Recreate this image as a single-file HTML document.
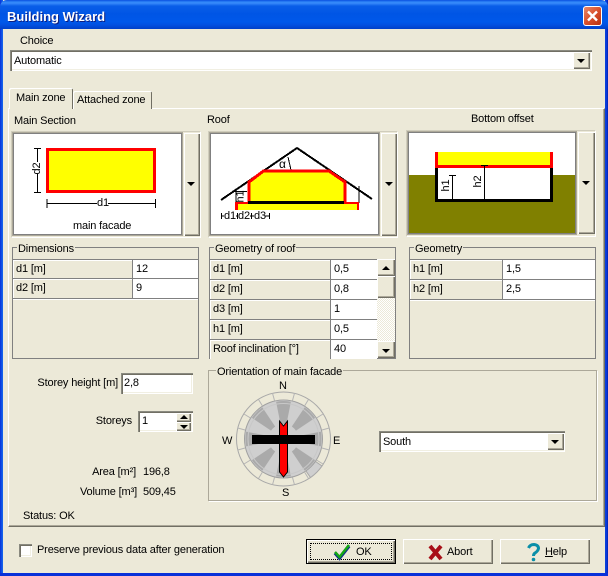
<!DOCTYPE html>
<html><head><meta charset="utf-8"><title>Building Wizard</title>
<style>
html,body{margin:0;padding:0;width:608px;height:576px;overflow:hidden;background:#0831d9}
*{box-sizing:border-box}
div,span,svg{position:absolute}
#win{left:0;top:0;width:608px;height:576px;background:#ECE9D8;font:11px/13px "Liberation Sans",sans-serif;letter-spacing:-.15px;color:#000;overflow:hidden}
.t{white-space:nowrap}
.bev{background:#ECE9D8;box-shadow:inset 1px 1px #fff,inset -1px -1px #716f64,inset -2px -2px #aca899}
.sunk{background:#fff;box-shadow:inset 1px 1px #8a8a80,inset 2px 2px #716f64,inset -1px -1px #fff,inset -2px -2px #f1efe2}
.arr{width:0;height:0;border-left:4px solid transparent;border-right:4px solid transparent;border-top:4px solid #000}
.up{width:0;height:0;border-left:4px solid transparent;border-right:4px solid transparent;border-bottom:4px solid #000}
.pic{background:#fff;border:1px solid #808080;box-shadow:0 0 0 1px #aca899}
.frame{border:1px solid #d0cdbc;border-right-color:#fff;border-bottom-color:#fff}
.grp{border:1px solid #808080}
.cell{border-top:1px solid #808080;border-left:1px solid #808080;height:20px;line-height:18px;padding-left:3px;white-space:nowrap}
.lab{background:#ECE9D8;box-shadow:inset 1px 1px #fff}
.val{background:#fff}
.btn{background:#ECE9D8;height:25px;width:90px;top:539px;box-shadow:inset 1px 1px #fff,inset -1px -1px #716f64,inset -2px -2px #aca899}
</style></head><body>
<div id="win">
<!-- window frame -->
<div style="left:0;top:0;width:3px;height:576px;background:linear-gradient(90deg,#0831d9,#166aee)"></div>
<div style="left:605px;top:0;width:3px;height:576px;background:linear-gradient(90deg,#0a45d8,#0831d9 70%,#001ea0)"></div>
<div style="left:0;top:573px;width:608px;height:3px;background:#0831d9"></div>
<!-- title -->
<div style="left:0;top:0;width:608px;height:29px;border-radius:7px 7px 0 0;background:linear-gradient(180deg,#0a50e0 0,#2f86f8 2px,#3a8cfb 3px,#0a5ee8 6px,#0055e5 14px,#0058ea 22px,#0250e0 25px,#0140c8 29px)"></div>
<div class="t" style="left:7px;top:9px;font:bold 13px/15px 'Liberation Sans',sans-serif;letter-spacing:0;color:#fff;text-shadow:1px 1px #0f1f80">Building Wizard</div>
<div style="left:583px;top:6px;width:19px;height:20px;border:1px solid #fff;border-radius:3px;background:linear-gradient(135deg,#e8896a,#d9502c 50%,#b83010)"></div>
<svg style="left:583px;top:6px" width="19" height="20"><path d="M5 5.500L14 14.500M14 5.500L5 14.500" stroke="#fff" stroke-width="2.400"/></svg>
<!-- choice -->
<div class="t" style="left:20px;top:35px">Choice</div>
<div class="sunk" style="left:10px;top:50px;width:582px;height:21px"></div>
<div class="t" style="left:14px;top:55px">Automatic</div>
<div class="bev" style="left:573px;top:52px;width:17px;height:17px"></div>
<div class="arr" style="left:577px;top:59px"></div>
<!-- tabs + page -->
<div style="left:8px;top:108px;width:597px;height:419px;border-top:1px solid #fff;border-left:1px solid #fff;border-right:1px solid #716f64;border-bottom:1px solid #716f64;box-shadow:inset -1px -1px #aca899"></div>
<div class="bev" style="left:73px;top:91px;width:79px;height:18px;border-radius:2px 2px 0 0;box-shadow:inset 1px 1px #fff,inset -1px 0 #716f64"></div>
<div style="left:9px;top:88px;width:64px;height:21px;background:#ECE9D8;border-radius:2px 2px 0 0;box-shadow:inset 1px 1px #fff,inset -1px 0 #716f64"></div>
<div class="t" style="left:16px;top:92px">Main zone</div>
<div class="t" style="left:77px;top:94px">Attached zone</div>
<!-- section labels -->
<div class="t" style="left:14px;top:115px">Main Section</div>
<div class="t" style="left:207px;top:114px">Roof</div>
<div class="t" style="left:471px;top:113px">Bottom offset</div>
<!-- picture 1 -->
<div class="frame" style="left:11px;top:131px;width:190px;height:107px"></div>
<div class="pic" style="left:13px;top:133px;width:169px;height:102px"></div>
<div class="bev" style="left:184px;top:133px;width:16px;height:103px"></div>
<div class="arr" style="left:187px;top:182px"></div>
<svg style="left:0;top:0" width="608" height="260" shape-rendering="crispEdges">
<rect x="47.500" y="149.500" width="107" height="42" fill="#ff0" stroke="#f00" stroke-width="3"/>
<path d="M34 148.500H41M34 192.500H41M37.500 148V162M37.500 174V193M47 199V208M155.500 199V208M47 203.500H97M108 203.500H155" stroke="#000" fill="none"/>
</svg>
<div class="t" style="left:30px;top:162px;transform:rotate(-90deg);width:15px;text-align:center">d2</div>
<div class="t" style="left:97px;top:197px">d1</div>
<div class="t" style="left:73px;top:220px">main facade</div>
<!-- picture 2 -->
<div class="frame" style="left:208px;top:131px;width:190px;height:107px"></div>
<div class="pic" style="left:210px;top:133px;width:169px;height:102px"></div>
<div class="bev" style="left:381px;top:133px;width:16px;height:103px"></div>
<div class="arr" style="left:385px;top:182px"></div>
<svg style="left:0;top:0" width="608" height="260" shape-rendering="crispEdges">
<path d="M221 200L297 148L372 199" fill="none" stroke="#000" stroke-width="2"/>
<path d="M236 190V203M359 186V203M288 157L291 170" stroke="#000" fill="none" stroke-width="1"/>
<path d="M249 202V182L263 171H329L345 182V202Z" fill="#ff0"/>
<path d="M249 202V182L263.500 171H329L345 182V202" fill="none" stroke="#f00" stroke-width="3"/>
<rect x="235" y="202" width="124" height="8" fill="#f00"/>
<rect x="238" y="204" width="119" height="6" fill="#ff0"/>
<rect x="248" y="201" width="96" height="3" fill="#000"/>
<rect x="235" y="191" width="12" height="1" fill="#000"/>
<path d="M221.500 213V219M222 216H224M237.500 213V219M236 216H238M251.500 213V219M250 216H254M269.500 213V219M265 216H269" stroke="#000" fill="none"/>
</svg>
<div class="t" style="left:232px;top:190px;transform:rotate(-90deg);width:18px;text-align:center">h1</div>
<div class="t" style="left:279px;top:158px;font-size:12px">α</div>
<div class="t" style="left:224px;top:210px">d1</div>
<div class="t" style="left:238px;top:210px">d2</div>
<div class="t" style="left:254px;top:210px">d3</div>
<!-- picture 3 -->
<div class="frame" style="left:406px;top:130px;width:190px;height:107px"></div>
<div class="pic" style="left:408px;top:132px;width:168px;height:102px;background:linear-gradient(180deg,#fff 0,#fff 42px,#808000 42px)"></div>
<div class="bev" style="left:578px;top:132px;width:17px;height:102px"></div>
<div class="arr" style="left:582px;top:181px"></div>
<svg style="left:0;top:0" width="608" height="260" shape-rendering="crispEdges">
<rect x="435" y="152" width="118" height="50" fill="#000"/>
<rect x="438" y="168" width="112" height="31" fill="#fff"/>
<rect x="435" y="152" width="118" height="16" fill="#f00"/>
<rect x="438" y="152" width="112" height="13" fill="#ff0"/>
<path d="M452.500 175V199M449 175.500H456M484.500 165V199M481 165.500H488" stroke="#000" fill="none"/>
</svg>
<div class="t" style="left:439px;top:179px;transform:rotate(-90deg);width:15px;text-align:center">h1</div>
<div class="t" style="left:471px;top:175px;transform:rotate(-90deg);width:15px;text-align:center">h2</div>
<!-- Dimensions -->
<div class="grp" style="left:12px;top:247px;width:187px;height:112px"></div>
<div class="t" style="left:17px;top:243px;background:#ECE9D8;padding:0 1px">Dimensions</div>
<div class="cell lab" style="left:12px;top:259px;width:120px">d1 [m]</div>
<div class="cell val" style="left:132px;top:259px;width:66px">12</div>
<div class="cell lab" style="left:12px;top:278px;width:120px">d2 [m]</div>
<div class="cell val" style="left:132px;top:278px;width:66px">9</div>
<div style="left:13px;top:298px;width:185px;height:1px;background:#808080"></div>
<div style="left:13px;top:299px;width:185px;height:1px;background:#fff"></div>
<!-- Geometry of roof -->
<div class="grp" style="left:209px;top:247px;width:187px;height:112px"></div>
<div class="t" style="left:214px;top:243px;background:#ECE9D8;padding:0 1px">Geometry of roof</div>
<div class="cell lab" style="left:209px;top:259px;width:121px">d1 [m]</div>
<div class="cell val" style="left:330px;top:259px;width:47px">0,5</div>
<div class="cell lab" style="left:209px;top:279px;width:121px">d2 [m]</div>
<div class="cell val" style="left:330px;top:279px;width:47px">0,8</div>
<div class="cell lab" style="left:209px;top:299px;width:121px">d3 [m]</div>
<div class="cell val" style="left:330px;top:299px;width:47px">1</div>
<div class="cell lab" style="left:209px;top:319px;width:121px">h1 [m]</div>
<div class="cell val" style="left:330px;top:319px;width:47px">0,5</div>
<div class="cell lab" style="left:209px;top:339px;width:121px">Roof inclination [°]</div>
<div class="cell val" style="left:330px;top:339px;width:47px">40</div>
<div style="left:377px;top:259px;width:18px;height:99px;background:repeating-conic-gradient(#fff 0 25%,#ECE9D8 0 50%) 0 0/2px 2px"></div>
<div class="bev" style="left:377px;top:259px;width:18px;height:17px"></div>
<div class="up" style="left:382px;top:266px"></div>
<div class="bev" style="left:377px;top:276px;width:18px;height:22px"></div>
<div class="bev" style="left:377px;top:341px;width:18px;height:17px"></div>
<div class="arr" style="left:382px;top:349px"></div>
<!-- Geometry -->
<div class="grp" style="left:409px;top:247px;width:187px;height:112px"></div>
<div class="t" style="left:414px;top:243px;background:#ECE9D8;padding:0 1px">Geometry</div>
<div class="cell lab" style="left:409px;top:259px;width:93px">h1 [m]</div>
<div class="cell val" style="left:502px;top:259px;width:93px">1,5</div>
<div class="cell lab" style="left:409px;top:279px;width:93px">h2 [m]</div>
<div class="cell val" style="left:502px;top:279px;width:93px">2,5</div>
<div style="left:410px;top:299px;width:185px;height:1px;background:#808080"></div>
<div style="left:410px;top:300px;width:185px;height:1px;background:#fff"></div>
<!-- left fields -->
<div class="t" style="right:490px;top:377px">Storey height [m]</div>
<div class="sunk" style="left:121px;top:373px;width:72px;height:21px"></div>
<div class="t" style="left:124px;top:377px">2,8</div>
<div class="t" style="right:476px;top:415px">Storeys</div>
<div class="sunk" style="left:138px;top:411px;width:55px;height:21px"></div>
<div class="t" style="left:142px;top:415px">1</div>
<div class="bev" style="left:176px;top:413px;width:15px;height:9px"></div>
<div class="bev" style="left:176px;top:422px;width:15px;height:9px"></div>
<div class="up" style="left:180px;top:415px"></div>
<div class="arr" style="left:180px;top:425px"></div>
<div class="t" style="right:472px;top:466px">Area [m²]</div>
<div class="t" style="left:143px;top:466px">196,8</div>
<div class="t" style="right:471px;top:486px">Volume [m³]</div>
<div class="t" style="left:143px;top:486px">509,45</div>
<div class="t" style="left:23px;top:510px">Status: OK</div>
<!-- Orientation -->
<div style="left:208px;top:370px;width:389px;height:131px;border:1px solid #aca899;box-shadow:1px 1px #fff"></div>
<div class="t" style="left:216px;top:366px;background:#ECE9D8;padding:0 1px">Orientation of main facade</div>
<svg style="left:0;top:370px" width="608" height="130" viewBox="0 370 608 130">
<g transform="translate(283.500 439)">
<circle r="47" fill="#ECE9D8" stroke="#a8a8a8"/>
<path d="M31.900 22.400L38.500 27A47 47 0 0 1 27 38.500L22.400 31.900A39 39 0 0 0 31.900 22.400Z" fill="#cfcfcf" stroke="#a8a8a8"/>
<circle r="39" fill="#cfcfcf" stroke="#a0a0a0"/>
<g fill="#aaa">
<path d="M0 0L-7.400 -37.300A38 38 0 0 1 7.400 -37.300Z"/>
<path d="M0 0L-7.400 -37.300A38 38 0 0 1 7.400 -37.300Z" transform="rotate(45)"/>
<path d="M0 0L-7.400 -37.300A38 38 0 0 1 7.400 -37.300Z" transform="rotate(90)"/>
<path d="M0 0L-7.400 -37.300A38 38 0 0 1 7.400 -37.300Z" transform="rotate(135)"/>
<path d="M0 0L-7.400 -37.300A38 38 0 0 1 7.400 -37.300Z" transform="rotate(180)"/>
<path d="M0 0L-7.400 -37.300A38 38 0 0 1 7.400 -37.300Z" transform="rotate(225)"/>
<path d="M0 0L-7.400 -37.300A38 38 0 0 1 7.400 -37.300Z" transform="rotate(270)"/>
<path d="M0 0L-7.400 -37.300A38 38 0 0 1 7.400 -37.300Z" transform="rotate(315)"/>
</g>
<circle r="15" fill="#cfcfcf"/>
<circle r="35.500" fill="none" stroke="#c8c8c8"/>
<g stroke="#b4b4b4">
<path d="M9 -38.500L11 -45.700M-9 -38.500L-11 -45.700M9 38.500L11 45.700M-9 38.500L-11 45.700M38.500 9L45.700 11M38.500 -9L45.700 -11M-38.500 9L-45.700 11M-38.500 -9L-45.700 -11"/>
<path d="M21 -33L25 -39.500M-21 -33L-25 -39.500M21 33L25 39.500M-21 33L-25 39.500M33 21L39.500 25M33 -21L39.500 -25M-33 21L-39.500 25M-33 -21L-39.500 -25"/>
</g>
</g>
<path d="M279.500 421L283.500 426L287.500 421V472L283.500 477L279.500 472Z" fill="#f00" stroke="#000"/>
<rect x="252" y="435" width="63" height="9" fill="#000"/>
</svg>
<div class="t" style="left:279px;top:380px">N</div>
<div class="t" style="left:282px;top:487px">S</div>
<div class="t" style="left:222px;top:435px">W</div>
<div class="t" style="left:333px;top:435px">E</div>
<div class="sunk" style="left:379px;top:431px;width:186px;height:21px"></div>
<div class="t" style="left:383px;top:436px">South</div>
<div class="bev" style="left:547px;top:433px;width:17px;height:17px"></div>
<div class="arr" style="left:551px;top:440px"></div>
<!-- bottom -->
<div class="sunk" style="left:19px;top:544px;width:13px;height:13px"></div>
<div class="t" style="left:37px;top:544px">Preserve previous data after generation</div>
<div class="btn" style="left:306px;border:1px solid #000"></div>
<div style="left:310px;top:543px;width:82px;height:17px;border:1px dotted #000"></div>
<svg style="left:333px;top:542px" width="20" height="20"><path d="M2 10L6.500 15L16 3" fill="none" stroke="#10308a" stroke-width="3.500" transform="translate(0 1)"/><path d="M2 10L6.500 15L16 3" fill="none" stroke="#14a814" stroke-width="2.500"/></svg>
<div class="t" style="left:356px;top:546px">OK</div>
<div class="btn" style="left:403px"></div>
<svg style="left:427px;top:544px" width="17" height="17"><path d="M3 2L14 15M14 2L3 15" fill="none" stroke="#a81018" stroke-width="4"/></svg>
<div class="t" style="left:447px;top:546px">Abort</div>
<div class="btn" style="left:500px"></div>
<svg style="left:526px;top:543px" width="16" height="20"><path d="M2.500 5Q4 1.500 8 1.500Q12.500 2 12.500 5.500Q12 8 9 10Q7.500 11 7.500 13" fill="none" stroke="#0a8fa8" stroke-width="3"/><circle cx="7.500" cy="16.500" r="1.800" fill="#0a8fa8"/></svg>
<div class="t" style="left:545px;top:546px"><u>H</u>elp</div>
</div>
</body></html>
